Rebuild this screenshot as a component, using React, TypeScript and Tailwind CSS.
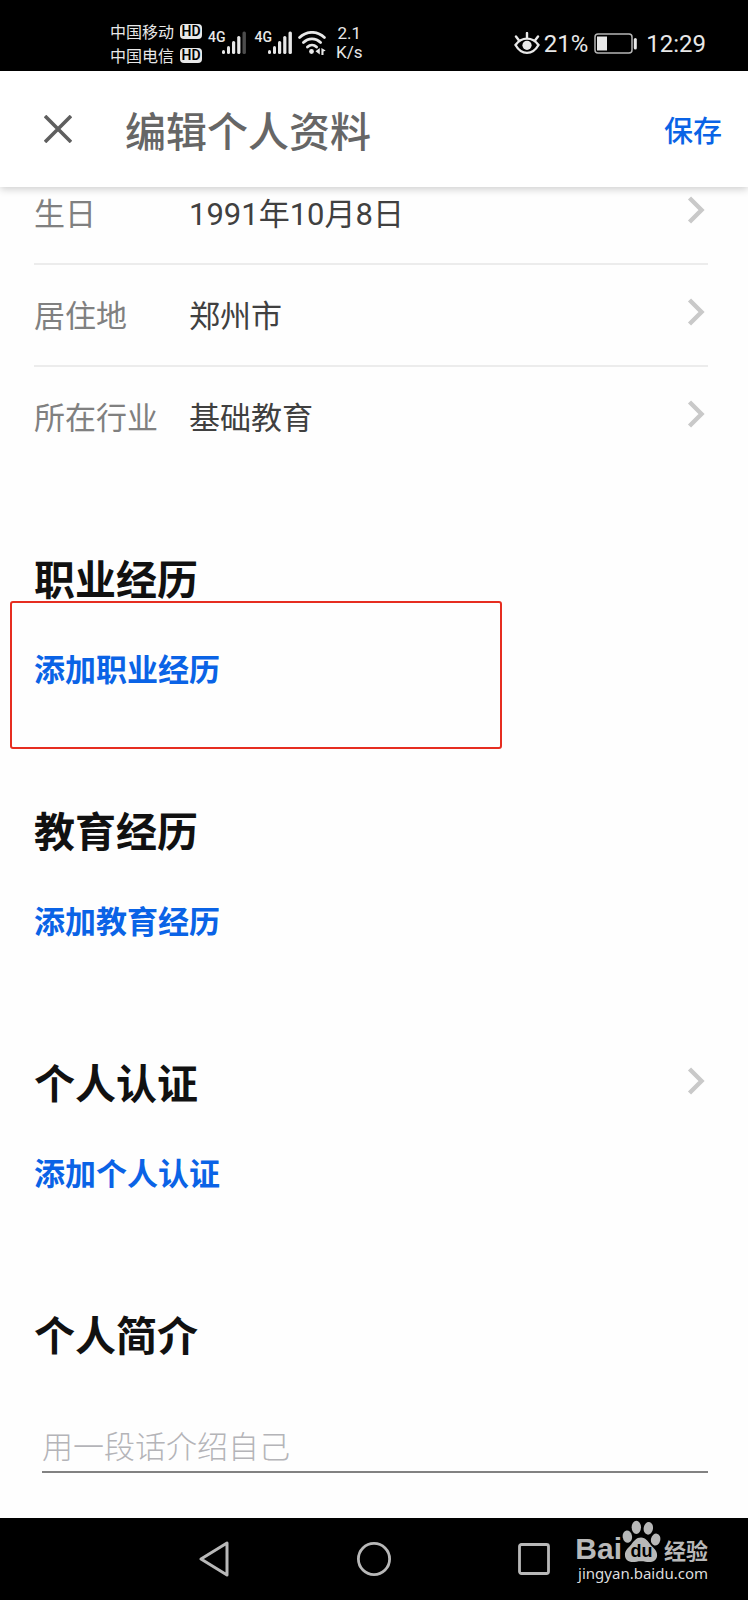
import React from "react";

const fields = [
  { label: "生日", value: "1991年10月8日" },
  { label: "居住地", value: "郑州市" },
  { label: "所在行业", value: "基础教育" },
];

function Signal({ weak = false }: { weak?: boolean }) {
  return (
    <div className="flex items-start">
      <span className="text-sm leading-3 font-medium font-['Roboto',sans-serif]">4G</span>
      <svg width="25" height="24" viewBox="0 0 25 24" fill="#e8e8e8" className="-ml-1" aria-hidden="true">
        <rect x="0" y="19" width="3" height="4" rx="1.5" />
        <rect x="5" y="15" width="3" height="8" rx="1.5" />
        <rect x="10" y="10" width="3.2" height="13" rx="1.5" />
        <rect x="15.2" y="5" width="3.2" height="18" rx="1.5" />
        <rect x="20.5" y="0.5" width="3.4" height="22.5" rx="1.5" fill={weak ? "#4c4c4c" : "#e8e8e8"} />
      </svg>
    </div>
  );
}

function Carrier({ name }: { name: string }) {
  return (
    <div className="flex items-center gap-[6px]">
      <span className="text-base leading-6">{name}</span>
      <span className="flex h-[15px] w-[22px] items-center justify-center rounded-[4px] bg-[#e8e8e8] text-sm leading-3 font-semibold text-black font-['Roboto',sans-serif]">
        HD
      </span>
    </div>
  );
}

function StatusBar() {
  return (
    <div className="flex h-[71px] items-start justify-between bg-black pr-[42px] pl-[110px] text-[#e8e8e8]">
      <div className="flex pt-[19px]">
        <div>
          <Carrier name="中国移动" />
          <Carrier name="中国电信" />
        </div>
        <div className="flex gap-2 pt-3 pl-[6px]">
          <Signal weak />
          <Signal />
        </div>
        <svg width="28" height="24" viewBox="0 0 28 24" fill="none" stroke="#e8e8e8" strokeWidth="2.8" strokeLinecap="round" className="mt-3 ml-[5px]" aria-hidden="true">
          <path d="M1.6 6.6C8.6-.4 19.4-.4 26.4 6.6" />
          <path d="M5.4 11.6c5-5 12.2-5 17.2 0" />
          <path d="M9.4 16c2.7-2.6 6.5-2.6 9.2 0" />
          <circle cx="13.500" cy="20.500" r="2.400" fill="#e8e8e8" stroke="none" />
          <path d="M21.800 17v6.500l-4.300-3.200zM23.400 17l4.300 2.400-2.200 1V24h-2.100z" fill="#e8e8e8" stroke="none" />
        </svg>
        <div className="pt-[5px] pl-[10px] text-center text-[17px] leading-[19px] font-['Roboto',sans-serif]">
          <div>2.1</div>
          <div>K/s</div>
        </div>
      </div>
      <div className="flex items-center pt-[30px] text-2xl leading-7 font-['Roboto',sans-serif]">
        <svg width="26" height="24" viewBox="0 0 26 24" fill="none" stroke="#e8e8e8" strokeWidth="2.4" strokeLinecap="round" aria-hidden="true">
          <path d="M1.5 13C7.5 4.500 18.500 4.500 24.500 13 18.500 23.500 7.500 23.500 1.500 13z" />
          <path d="M13 5.500V1M5 8.500 2 4.500M21 8.500l3-4" />
          <circle cx="13" cy="13.300" r="4.600" fill="#e8e8e8" stroke="none" />
        </svg>
        <span className="pl-1">21%</span>
        <svg width="44" height="22" viewBox="0 0 44 22" fill="none" className="ml-[6px]" aria-hidden="true">
          <rect x="1" y="1" width="37" height="19" rx="3" stroke="#b5b5b5" strokeWidth="1.5" />
          <rect x="3" y="3.5" width="10" height="14" fill="#e8e8e8" />
          <rect x="39.800" y="5" width="3" height="11.500" rx="1.500" fill="#e8e8e8" />
        </svg>
        <span className="pl-2">12:29</span>
      </div>
    </div>
  );
}

function Chevron() {
  return (
    <svg width="21" height="28" viewBox="0 0 21 28" fill="none" stroke="#c9c9c9" strokeWidth="4.4" aria-hidden="true">
      <path d="M2.5 2 14.5 14 2.5 26" />
    </svg>
  );
}

function Section({ title, action, chevron = false, marked = false }: { title: string; action: string; chevron?: boolean; marked?: boolean }) {
  return (
    <section className="relative h-[252px]">
      <div className="flex h-12 items-center justify-between">
        <h2 className="text-[41px] leading-[48px] font-bold text-[#111111]">{title}</h2>
        {chevron && (
          <button type="button" aria-label={title}>
            <Chevron />
          </button>
        )}
      </div>
      <button type="button" className="mt-[47px] block text-[31px] leading-10 font-bold text-[#0a63e6]">
        {action}
      </button>
      {marked && (
        <div className="pointer-events-none absolute top-12 -left-6 h-[148px] w-[492px] rounded-[3px] border-2 border-[#e62d20]" />
      )}
    </section>
  );
}

function Watermark() {
  return (
    <div className="absolute top-0 right-10 text-[#b8b8b8]">
      <div className="flex h-[45px] items-end">
        <span className="text-3xl leading-7 font-bold font-['Liberation_Sans',sans-serif]">Bai</span>
        <div className="relative">
          <svg width="39" height="43" viewBox="0 0 40 44" fill="#b8b8b8" aria-hidden="true">
            <ellipse cx="5.5" cy="17" rx="4.8" ry="6.3" transform="rotate(-8 5.5 17)" />
            <ellipse cx="14.7" cy="7.5" rx="4.8" ry="6.7" />
            <ellipse cx="27" cy="8.5" rx="4.8" ry="6.5" transform="rotate(8 27 8.5)" />
            <ellipse cx="34.5" cy="20" rx="4.8" ry="6.2" transform="rotate(12 34.5 20)" />
            <path d="M19.500 18c5 0 7 4 10 7.500 3 3.500 6.500 5.500 6.500 10.500 0 5-4 7-8 7-3 0-5-.8-8.500-.8S14 43 11 43c-4.500 0-8-2.500-8-7.500 0-4.500 3.500-7 6.500-10.500C12.500 21.500 14.500 18 19.500 18z" />
          </svg>
          <div className="absolute inset-x-0 bottom-0 flex justify-center">
            <span className="text-lg leading-6 font-bold text-black font-['Liberation_Sans',sans-serif]">du</span>
          </div>
        </div>
        <span className="pb-[2px] pl-[3px] text-[22px] leading-6 font-bold">经验</span>
      </div>
      <div className="text-right text-[15px] leading-5 text-[#dddddd] font-['Noto_Sans',sans-serif]">jingyan.baidu.com</div>
    </div>
  );
}

export default function App() {
  return (
    <div className="min-h-screen bg-[#fefefe] font-['Noto_Sans_CJK_SC',sans-serif]">
      <StatusBar />
      <header className="relative z-10 flex h-[116px] items-center bg-white pr-[26px] pl-[44px] shadow-[0_2px_8px_rgba(0,0,0,0.2)]">
        <button type="button" aria-label="关闭">
          <svg width="28" height="28" viewBox="0 0 28 28" fill="none" stroke="#5f5f5f" strokeWidth="3.6" aria-hidden="true">
            <path d="M1 1l26 26M27 1 1 27" />
          </svg>
        </button>
        <h1 className="flex-1 pl-[53px] text-[41px] leading-[48px] font-medium text-[#666666]">编辑个人资料</h1>
        <button type="button" className="text-[29px] leading-9 font-medium text-[#0a63e6]">
          保存
        </button>
      </header>

      <main>
        <div className="-mt-6 pr-10 pl-[34px] text-[31px] leading-10 font-['Roboto','Noto_Sans_CJK_SC',sans-serif]">
          {fields.map((field) => (
            <button
              type="button"
              key={field.label}
              className="flex h-[102px] w-full items-center border-b-2 border-[#ececec] text-left last:border-transparent"
            >
              <span className="w-[155px] pt-1 text-[#808080]">{field.label}</span>
              <span className="flex-1 pt-1 text-[#404040]">{field.value}</span>
              <span className="-mt-[6px]">
                <Chevron />
              </span>
            </button>
          ))}
        </div>

        <div className="pt-[84px] pr-10 pl-[34px]">
          <Section title="职业经历" action="添加职业经历" marked />
          <Section title="教育经历" action="添加教育经历" />
          <Section title="个人认证" action="添加个人认证" chevron />
          <h2 className="text-[41px] leading-[48px] font-bold text-[#111111]">
            <label htmlFor="bio">个人简介</label>
          </h2>
          <div className="pt-16 pl-2">
            <input
              id="bio"
              type="text"
              placeholder="用一段话介绍自己"
              className="block h-[52px] w-full border-b-2 border-[#828282] bg-transparent pb-1 text-[31px] leading-10 font-light text-[#404040] outline-none placeholder:text-[#b4b4b8]"
            />
          </div>
        </div>
      </main>

      <nav className="relative mt-[45px] flex h-[82px] items-center justify-center gap-[126px] bg-black">
        <button type="button" aria-label="返回">
          <svg width="32" height="36" viewBox="0 0 32 36" fill="none" stroke="#b8b8b8" strokeWidth="3" strokeLinejoin="round" aria-hidden="true">
            <path d="M3 18 29 2v32z" />
          </svg>
        </button>
        <button type="button" aria-label="主页">
          <svg width="36" height="36" viewBox="0 0 36 36" fill="none" stroke="#b8b8b8" strokeWidth="2.8" aria-hidden="true">
            <circle cx="18" cy="18" r="15.6" />
          </svg>
        </button>
        <button type="button" aria-label="最近任务">
          <svg width="32" height="32" viewBox="0 0 32 32" fill="none" stroke="#b8b8b8" strokeWidth="2.8" aria-hidden="true">
            <rect x="1.5" y="1.5" width="29" height="29" rx="2" />
          </svg>
        </button>
        <Watermark />
      </nav>
    </div>
  );
}
